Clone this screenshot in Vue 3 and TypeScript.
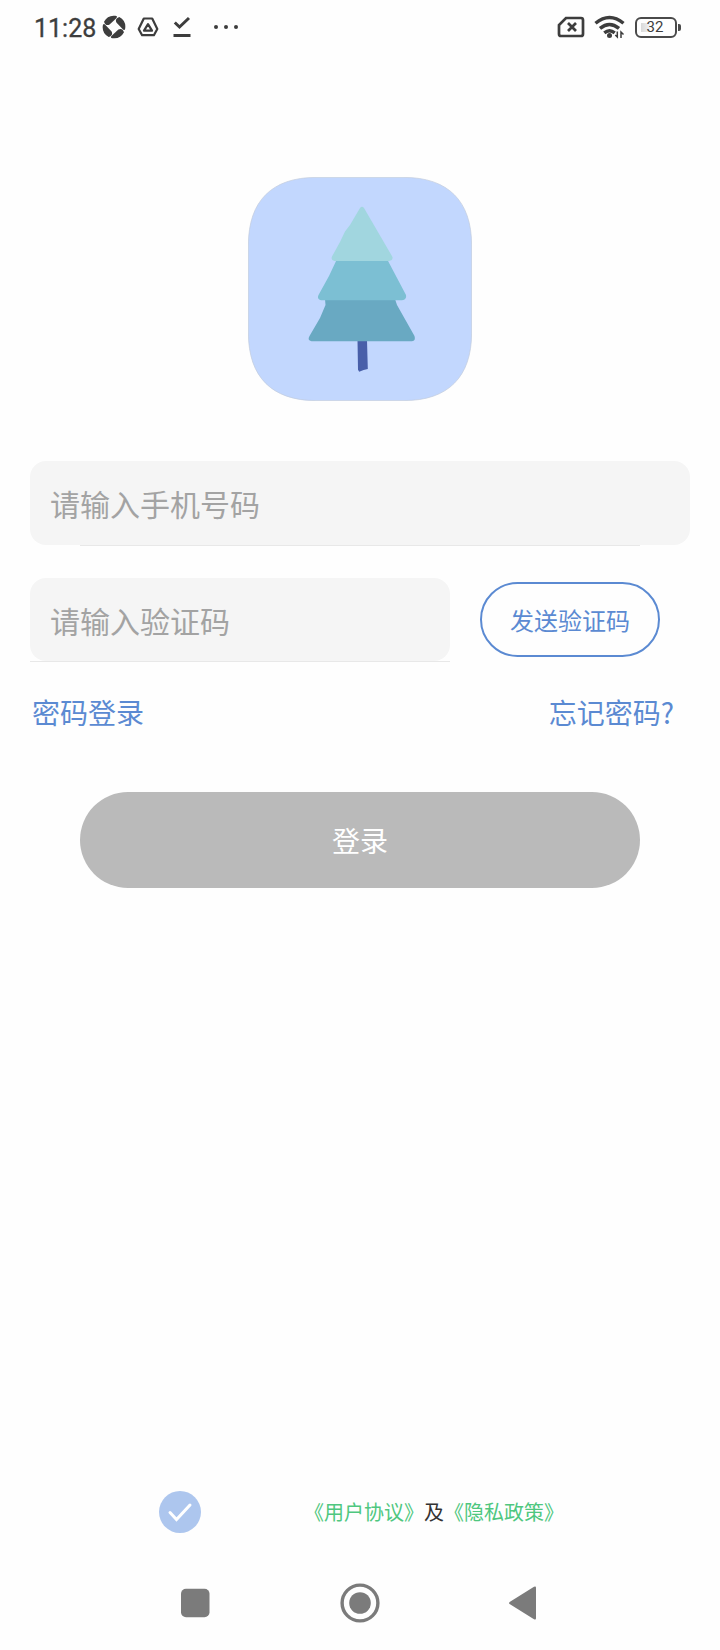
<template>
    <div class="screen">
        <header class="status-bar">
            <span class="time">11:28</span>
            <svg class="aperture" width="24" height="24" viewBox="-12 -12 24 24">
                <path v-for="angle in bladeAngles" :key="angle" :transform="`rotate(${angle})`"
                    d="M5.300-10A11.300 11.300 0 0 1 11.200 1.500Q10.700 4.500 8.300 1.800L2.400-4.400Q.6-8.500 5.300-10Z" />
            </svg>
            <svg class="drive" width="22" height="20" viewBox="0 0 22 20">
                <path d="M6.800 1.500h8.400L20.300 12l-3.400 6.200H5.100L1.700 12z" />
                <path d="M11 7.200 15 13.700H7z" />
            </svg>
            <svg class="done" width="18" height="22" viewBox="0 0 18 22">
                <path d="M1.800 6.500 6.500 11 16 2" />
                <path d="M.5 19.500h17" />
            </svg>
            <svg class="dots" width="26" height="6" viewBox="0 0 26 6">
                <circle cx="3" cy="3" r="2" />
                <circle cx="13" cy="3" r="2" />
                <circle cx="23" cy="3" r="2" />
            </svg>
            <svg class="sim" width="28" height="22" viewBox="0 0 28 22">
                <path d="M9 2h15q2 0 2 2v14q0 2-2 2H4q-2 0-2-2V9z" />
                <path d="m11 7 8 8m0-8-8 8" />
            </svg>
            <svg class="wifi" width="32" height="24" viewBox="0 0 32 24">
                <path d="M1.500 8.300Q15.500-3.500 29.500 8.300M6 13.400q9.500-8 19 0M10.300 17.900q5.200-4.200 10.400 0" />
                <circle cx="15.500" cy="20.500" r="2.500" />
                <path class="arrows" d="M23.300 16.500V22l-2-2M27 23v-6l2.500 2.500" />
            </svg>
            <span class="battery">
                <span class="level">32</span>
            </span>
        </header>

        <main class="content">
            <svg class="logo" width="224" height="224" viewBox="0 0 224 224">
                <path fill="#c2d7fe" stroke="#c2cbdc" stroke-width=".7"
                    d="M68 .4H156C200 .4 223.600 24 223.600 68V156C223.600 200 200 223.600 156 223.600H68C24 223.600 .4 200 .4 156V68C.4 24 24 .4 68 .4Z" />
                <path fill="#485fa9" d="M109.500 163h9.500l.8 29q-4 .6-8.600 2.800l-1.200-2z" />
                <path fill="#69a9c2"
                    d="M77 122H147L149 128 166.500 159Q168 164 164 164.200H63.500Q59 163.500 61.500 159L72 141 77.500 128Z" />
                <path fill="#7cbfd3" d="M89 82H139L158 118Q159 122.500 154 123.300H73Q68.500 122 70.500 118L81 99Z" />
                <path fill="#a1d6df"
                    d="M112 31Q114 28.500 116 31L144.500 80Q145 83.500 141 83.900H86.500Q82.500 83 84 79.500L92 65 97 54.500 102 48Z" />
            </svg>

            <form class="login-form" @submit.prevent>
                <div class="field phone">
                    <input v-model="phone" type="tel" placeholder="请输入手机号码" />
                </div>
                <div class="code-row">
                    <div class="field code">
                        <input v-model="code" type="text" placeholder="请输入验证码" />
                    </div>
                    <button type="button" class="send">发送验证码</button>
                </div>
                <div class="links">
                    <a>密码登录</a>
                    <a>忘记密码?</a>
                </div>
                <button type="submit" class="submit">登录</button>
            </form>
        </main>

        <div class="agreement">
            <button type="button" class="check" @click="agreed = !agreed">
                <svg v-if="agreed" width="42" height="42" viewBox="0 0 42 42">
                    <path d="m11 21.500 6.500 7L31 14" />
                </svg>
            </button>
            <p><a>《用户协议》</a>及<a>《隐私政策》</a></p>
        </div>

        <nav class="nav-bar">
            <svg width="40" height="40" viewBox="0 0 40 40">
                <rect x="6" y="5.700" width="28.500" height="28.500" rx="5" />
            </svg>
            <svg width="40" height="40" viewBox="0 0 40 40">
                <circle cx="20" cy="20" r="17.900" fill="none" stroke="#7b7b7b" stroke-width="3.400" />
                <circle cx="20" cy="20" r="10.800" />
            </svg>
            <svg width="40" height="40" viewBox="0 0 40 40">
                <path d="M6 18.700 30 3.800q2-1 2 1v30.400q0 2-2 1L6 21.300q-2-1.300 0-2.600z" />
            </svg>
        </nav>
    </div>
</template>

<script setup lang="ts">
import { ref } from "vue"

const phone = ref("")
const code = ref("")
const agreed = ref(true)

const bladeAngles = [0, 90, 180, 270]
</script>

<style>
body {
    margin: 0;
    background: #fefefe;
}
</style>

<style scoped>
.screen {
    display: flex;
    flex-direction: column;
    width: 720px;
    height: 1650px;
    font-family: "Noto Sans CJK SC", sans-serif;
    font-weight: 400;
    background: #fefefe;
}

.screen * {
    box-sizing: border-box;
}

svg {
    display: block;
    flex: none;
}

button {
    padding: 0;
    border: none;
    font-family: inherit;
    font-weight: inherit;
}

.status-bar {
    display: flex;
    align-items: center;
    height: 54px;
    padding: 0 39px 0 34px;
    color: #3d3d3d;
    font-family: Roboto, sans-serif;
}

.time {
    width: 68px;
    padding-top: 3px;
    font-size: 25px;
    font-weight: 400;
    line-height: 30px;
    white-space: nowrap;
    -webkit-text-stroke: 0.3px #3d3d3d;
}

.aperture {
    fill: #3d3d3d;
}

.drive {
    margin-left: 11px;
    fill: none;
    stroke: #3d3d3d;
    stroke-width: 2.2;
    stroke-linejoin: round;
}

.done {
    margin-left: 14px;
    fill: none;
    stroke: #3d3d3d;
    stroke-width: 3;
}

.dots {
    margin-left: 22px;
    fill: #3d3d3d;
}

.sim {
    margin-left: auto;
    fill: none;
    stroke: #3d3d3d;
    stroke-width: 2.7;
}

.wifi {
    margin-left: 9px;
    fill: none;
    stroke: #3d3d3d;
    stroke-width: 3.4;
}

.wifi circle {
    fill: #3d3d3d;
    stroke: none;
}

.wifi .arrows {
    stroke-width: 1.5;
}

.battery {
    display: flex;
    align-items: center;
    margin-left: 9px;
}

.battery::after {
    content: "";
    width: 3px;
    height: 7px;
    margin-left: 1px;
    border-radius: 0 2px 2px 0;
    background: #4a4a4a;
}

.level {
    width: 42px;
    height: 21px;
    padding-right: 2px;
    border: 2px solid #4a4a4a;
    border-radius: 6px;
    background: linear-gradient(90deg, #d9d9d9, #f2f2f2) 4px 4px / 9px 9px no-repeat;
    font-size: 15px;
    font-weight: 400;
    line-height: 17px;
    text-align: center;
}

.content {
    display: flex;
    flex-direction: column;
    align-items: center;
    padding: 123px 30px 0;
}

.login-form {
    display: flex;
    flex-direction: column;
    width: 660px;
    margin-top: 60px;
}

.field input {
    display: block;
    width: 100%;
    height: 84px;
    padding: 0 20px;
    border: none;
    border-radius: 16px;
    outline: none;
    background: #f5f5f5;
    color: #333;
    font-family: inherit;
    font-size: 30px;
    font-weight: inherit;
}

.field input::placeholder {
    color: #a3a3a3;
    opacity: 1;
}

.phone::after {
    content: "";
    display: block;
    height: 1px;
    margin: 0 50px;
    background: #e8e8e8;
}

.code-row {
    display: flex;
    align-items: flex-start;
    gap: 30px;
    margin-top: 32px;
}

.code {
    width: 420px;
    border-bottom: 1px solid #e8e8e8;
}

.code input {
    height: 83px;
}

.send {
    width: 180px;
    height: 75px;
    margin-top: 4px;
    border: 2px solid #5b8ad2;
    border-radius: 38px;
    background: none;
    color: #5b8ad2;
    font-size: 24px;
}

.links {
    display: flex;
    justify-content: space-between;
    padding: 0 16px 0 2px;
    margin-top: 29px;
    color: #5b8ad2;
    font-size: 28px;
    line-height: 42px;
}

.submit {
    height: 96px;
    margin: 59px 50px 0;
    border-radius: 48px;
    background: #bababa;
    color: #fff;
    font-size: 28px;
}

.agreement {
    display: flex;
    align-items: center;
    height: 42px;
    margin-top: auto;
    padding-left: 159px;
}

.check {
    width: 42px;
    height: 42px;
    border-radius: 50%;
    background: #adc6ee;
}

.check path {
    fill: none;
    stroke: #fff;
    stroke-width: 3;
    stroke-linecap: round;
}

.agreement p {
    margin: 0 0 0 103px;
    color: #333;
    font-size: 20px;
    line-height: 30px;
}

.agreement a {
    color: #4fc77f;
}

.nav-bar {
    display: flex;
    justify-content: space-between;
    margin: 50px 176px 27px 175px;
    fill: #7b7b7b;
}
</style>
